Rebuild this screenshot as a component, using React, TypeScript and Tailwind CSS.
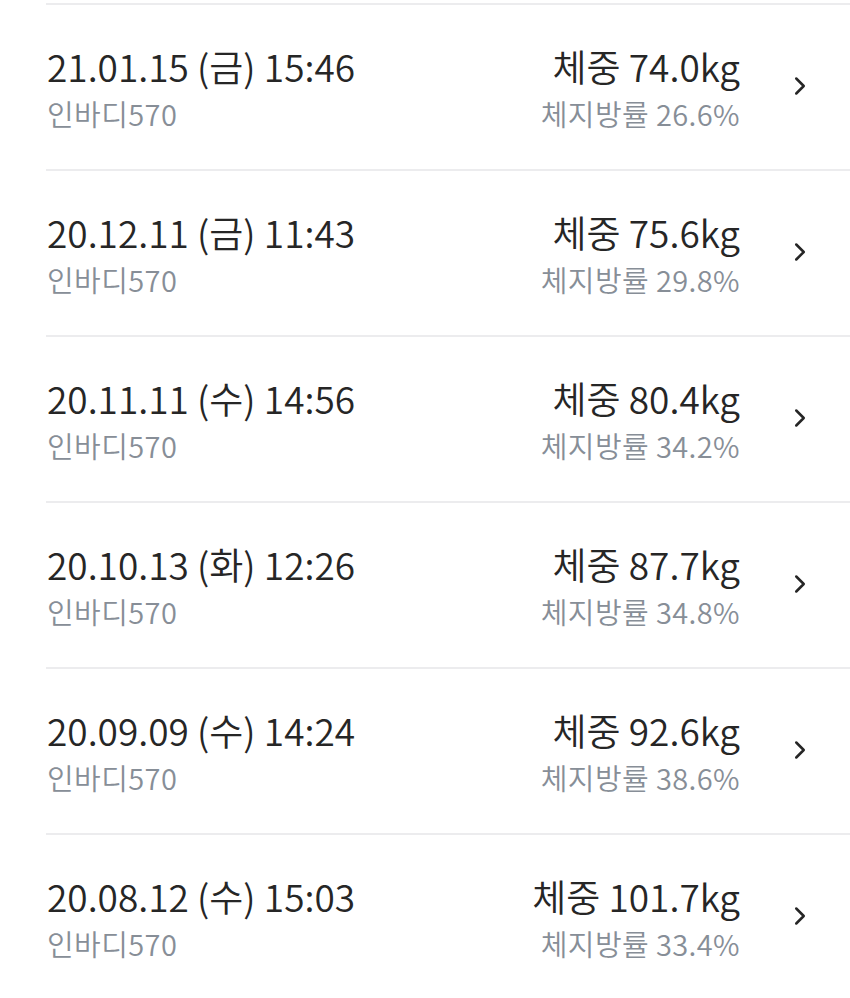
import { ChevronRight } from 'lucide-react';

const records = [
  { date: '21.01.15 (금) 15:46', weight: '74.0', fat: '26.6' },
  { date: '20.12.11 (금) 11:43', weight: '75.6', fat: '29.8' },
  { date: '20.11.11 (수) 14:56', weight: '80.4', fat: '34.2' },
  { date: '20.10.13 (화) 12:26', weight: '87.7', fat: '34.8' },
  { date: '20.09.09 (수) 14:24', weight: '92.6', fat: '38.6' },
  { date: '20.08.12 (수) 15:03', weight: '101.7', fat: '33.4' },
];

export default function App() {
  return (
    <div
      className="w-[850px] h-[998px] overflow-hidden bg-white pt-[3px]"
      style={{ fontFamily: '"Noto Sans CJK KR", "Noto Sans", sans-serif' }}
    >
      <ul className="ml-[46px]">
        {records.map((r) => (
          <li key={r.date} className="h-[166px] border-t-2 border-[#ececee]">
            <a href="#" className="flex items-start pt-[38px] pl-px">
              <div className="flex-1">
                <p className="text-[37px] leading-[46px] font-[350] text-[#262626]">{r.date}</p>
                <p className="mt-[5px] text-[29px] leading-[38px] font-[350] text-[#878e97] tracking-[0.4px]">인바디570</p>
              </div>
              <div className="text-right">
                <p className="text-[37px] leading-[46px] font-[350] text-[#262626]">체중 {r.weight}kg</p>
                <p className="mt-[5px] text-[29px] leading-[38px] font-[350] text-[#878e97] tracking-[0.4px]">체지방률 {r.fat}%</p>
              </div>
              <div className="w-[110px] flex justify-center pt-[28px] pl-[10px]">
                <ChevronRight className="w-[30px] h-[30px] text-[#262626]" strokeWidth={2} />
              </div>
            </a>
          </li>
        ))}
      </ul>
    </div>
  );
}
